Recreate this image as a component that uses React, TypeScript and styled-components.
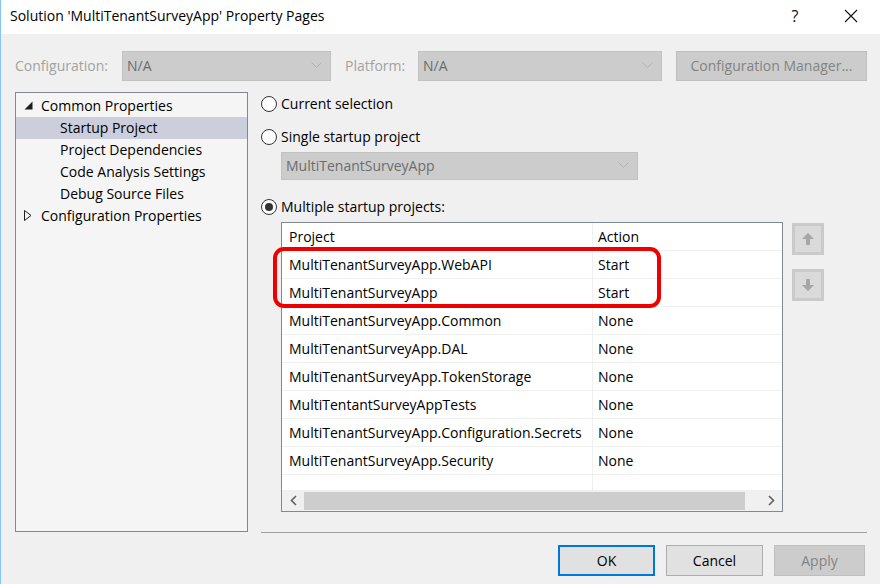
import React from "react";
import styled, { createGlobalStyle } from "styled-components";

const Global = createGlobalStyle`
  html, body { margin: 0; padding: 0; background: #f0f0f0; }
  * { box-sizing: border-box; }
`;

const Window = styled.div`
  width: 880px;
  height: 584px;
  background: #f0f0f0;
  border-left: 1px solid #86c5f5;
  font-family: "Open Sans", "Noto Sans", sans-serif;
  font-size: 14px;
  color: #000;
  display: flex;
  flex-direction: column;
  overflow: hidden;
`;

const TitleBar = styled.div`
  height: 34px;
  background: #fff;
  display: flex;
  align-items: center;
  padding-left: 9px;
  padding-bottom: 3px;
`;

const Title = styled.div`
  flex: 1;
  font-size: 14px;
`;

const TitleButton = styled.div<{ $mr?: number }>`
  width: 46px;
  height: 30px;
  margin-right: ${(p) => p.$mr ?? 0}px;
  display: flex;
  align-items: center;
  justify-content: center;
  font-size: 16px;
  color: #111;
`;

const ConfigRow = styled.div`
  margin-top: 17px;
  height: 30px;
  display: flex;
  align-items: center;
  padding-left: 14px;
`;

const DimLabel = styled.div<{ $w: number; $pl?: number }>`
  width: ${(p) => p.$w}px;
  padding-left: ${(p) => p.$pl ?? 0}px;
  padding-bottom: 1px;
  color: #a2a2a2;
`;

const Combo = styled.div<{ $w: number; $ml?: number; $mt?: number; $h?: number; $pb?: number }>`
  width: ${(p) => p.$w}px;
  height: ${(p) => p.$h ?? 30}px;
  margin-left: ${(p) => p.$ml ?? 0}px;
  margin-top: ${(p) => p.$mt ?? 0}px;
  background: #cccccc;
  border: 1px solid #c2c2c2;
  display: flex;
  align-items: center;
  padding: 0 8px ${(p) => p.$pb ?? 1}px 4px;
  color: #6d6d6d;
  font-size: 14px;
  flex-shrink: 0;
`;

const ComboText = styled.span`
  flex: 1;
`;

const DisabledButton = styled.div<{ $w: number; $ml?: number }>`
  width: ${(p) => p.$w}px;
  height: 30px;
  margin-left: ${(p) => p.$ml ?? 0}px;
  background: #cccccc;
  border: 1px solid #bfbfbf;
  color: #838383;
  display: flex;
  align-items: center;
  justify-content: center;
  padding-bottom: 1px;
`;

const Body = styled.div`
  margin-top: 11px;
  display: flex;
  padding-left: 14px;
`;

const Tree = styled.div`
  width: 233px;
  height: 440px;
  background: #f5f5f5;
  border: 1px solid #828790;
  padding-top: 2px;
`;

const TreeRow = styled.div<{ $indent: number; $sel?: boolean }>`
  height: 22px;
  display: flex;
  align-items: center;
  padding-left: ${(p) => p.$indent}px;
  padding-bottom: 1px;
  background: ${(p) => (p.$sel ? "#cccedb" : "transparent")};
  white-space: nowrap;
`;

const Expander = styled.span`
  width: 14px;
  margin-left: 8px;
  margin-right: 3px;
  display: inline-flex;
  align-items: center;
`;

const RightCol = styled.div`
  margin-left: 13px;
  width: 606px;
  display: flex;
  flex-direction: column;
`;

const RadioRow = styled.div<{ $mt: number }>`
  margin-top: ${(p) => p.$mt}px;
  height: 22px;
  display: flex;
  align-items: center;
  gap: 4px;
`;

const RadioLabel = styled.span`
  padding-bottom: 2px;
`;

const RadioCircle = styled.span<{ $on?: boolean }>`
  width: 16px;
  height: 16px;
  border-radius: 50%;
  border: 1px solid #333;
  background: #fff;
  display: inline-flex;
  align-items: center;
  justify-content: center;
  &::after {
    content: "";
    width: 8px;
    height: 8px;
    border-radius: 50%;
    background: ${(p) => (p.$on ? "#333" : "transparent")};
  }
`;

const TableArea = styled.div`
  margin-top: 4px;
  margin-left: 20px;
  display: flex;
  gap: 9px;
  position: relative;
`;

const Grid = styled.div`
  width: 502px;
  height: 290px;
  background: #fff;
  border: 1px solid #828790;
  display: flex;
  flex-direction: column;
`;

const GridRow = styled.div<{ $h?: number }>`
  height: ${(p) => p.$h ?? 28}px;
  display: grid;
  grid-template-columns: 310px 1fr;
  border-bottom: 1px solid #f0f0f0;
  flex-shrink: 0;
`;

const Cell = styled.div`
  display: flex;
  align-items: center;
  padding-left: 7px;
  white-space: nowrap;
  & + & {
    border-left: 1px solid #f0f0f0;
    padding-left: 5px;
  }
`;

const Filler = styled.div`
  flex: 1;
  display: grid;
  grid-template-columns: 310px 1fr;
  & > div + div {
    border-left: 1px solid #f0f0f0;
  }
`;

const HScroll = styled.div`
  height: 21px;
  background: #f0f0f0;
  display: flex;
  align-items: center;
  flex-shrink: 0;
`;

const ScrollArrow = styled.div`
  width: 22px;
  height: 100%;
  display: flex;
  align-items: center;
  justify-content: center;
`;

const Thumb = styled.div`
  width: 441px;
  height: 18px;
  background: #cdcdcd;
`;

const Highlight = styled.div`
  position: absolute;
  left: -8px;
  top: 25px;
  width: 388px;
  height: 61px;
  border: 4px solid #ee0000;
  border-radius: 11px;
  pointer-events: none;
`;

const MoveButtons = styled.div`
  display: flex;
  flex-direction: column;
  gap: 14px;
  padding-top: 1px;
`;

const MoveButton = styled.div`
  width: 32px;
  height: 32px;
  background: #dadada;
  border: 3px solid #cacaca;
  display: flex;
  align-items: center;
  justify-content: center;
`;

const Separator = styled.div`
  margin-top: 20px;
  height: 1px;
  background: #a0a0a0;
`;

const Footer = styled.div`
  margin-top: 12px;
  display: flex;
  justify-content: flex-end;
  gap: 11px;
  padding-right: 15px;
`;

const DialogButton = styled.div<{ $kind: "default" | "normal" | "disabled"; $w: number }>`
  width: ${(p) => p.$w}px;
  height: 31px;
  display: flex;
  align-items: center;
  justify-content: center;
  padding-bottom: 1px;
  background: ${(p) => (p.$kind === "disabled" ? "#cccccc" : "#e1e1e1")};
  border: ${(p) =>
    p.$kind === "default"
      ? "2px solid #0078d7"
      : p.$kind === "disabled"
      ? "1px solid #bfbfbf"
      : "1px solid #adadad"};
  color: ${(p) => (p.$kind === "disabled" ? "#838383" : "#000")};
`;

const Chevron = () => (
  <svg width="11" height="7" viewBox="0 0 11 7">
    <polyline points="0.5,0.5 5.5,5.5 10.5,0.5" fill="none" stroke="#b2b2b2" strokeWidth="1" />
  </svg>
);

const ArrowIcon = ({ up }: { up: boolean }) => (
  <svg width="14" height="14" viewBox="0 0 14 14" style={{ transform: up ? "none" : "rotate(180deg)" }}>
    <polygon points="7,1 13,7 9,7 9,13 5,13 5,7 1,7" fill="#a6a6a6" />
  </svg>
);

const rows: [string, string][] = [
  ["MultiTenantSurveyApp.WebAPI", "Start"],
  ["MultiTenantSurveyApp", "Start"],
  ["MultiTenantSurveyApp.Common", "None"],
  ["MultiTenantSurveyApp.DAL", "None"],
  ["MultiTenantSurveyApp.TokenStorage", "None"],
  ["MultiTentantSurveyAppTests", "None"],
  ["MultiTenantSurveyApp.Configuration.Secrets", "None"],
  ["MultiTenantSurveyApp.Security", "None"],
];

export default function App() {
  return (
    <>
      <Global />
      <Window>
        <TitleBar>
          <Title>Solution 'MultiTenantSurveyApp' Property Pages</Title>
          <TitleButton $mr={10}>?</TitleButton>
          <TitleButton $mr={6}>
            <svg width="14" height="14" viewBox="0 0 14 14">
              <path d="M1 1 L13 13 M13 1 L1 13" stroke="#111" strokeWidth="1.1" />
            </svg>
          </TitleButton>
        </TitleBar>

        <ConfigRow>
          <DimLabel $w={107}>Configuration:</DimLabel>
          <Combo $w={209}>
            <ComboText>N/A</ComboText>
            <Chevron />
          </Combo>
          <DimLabel $w={87} $pl={14}>Platform:</DimLabel>
          <Combo $w={244}>
            <ComboText>N/A</ComboText>
            <Chevron />
          </Combo>
          <DisabledButton $w={191} $ml={14}>Configuration Manager...</DisabledButton>
        </ConfigRow>

        <Body>
          <Tree>
            <TreeRow $indent={0}>
              <Expander>
                <svg width="9" height="9" viewBox="0 0 9 9">
                  <polygon points="8.5,0.5 8.5,8.5 0.5,8.5" fill="#1e1e1e" />
                </svg>
              </Expander>
              Common Properties
            </TreeRow>
            <TreeRow $indent={44} $sel>Startup Project</TreeRow>
            <TreeRow $indent={44}>Project Dependencies</TreeRow>
            <TreeRow $indent={44}>Code Analysis Settings</TreeRow>
            <TreeRow $indent={44}>Debug Source Files</TreeRow>
            <TreeRow $indent={0}>
              <Expander>
                <svg width="8" height="11" viewBox="0 0 8 11">
                  <polygon points="0.5,0.5 7,5.5 0.5,10.5" fill="none" stroke="#1e1e1e" strokeWidth="1" />
                </svg>
              </Expander>
              Configuration Properties
            </TreeRow>
          </Tree>

          <RightCol>
            <RadioRow $mt={1}>
              <RadioCircle />
              <RadioLabel>Current selection</RadioLabel>
            </RadioRow>
            <RadioRow $mt={11}>
              <RadioCircle />
              <RadioLabel>Single startup project</RadioLabel>
            </RadioRow>
            <Combo $w={357} $ml={20} $mt={4} $h={28} $pb={2}>
              <ComboText>MultiTenantSurveyApp</ComboText>
              <Chevron />
            </Combo>
            <RadioRow $mt={16}>
              <RadioCircle $on />
              <RadioLabel>Multiple startup projects:</RadioLabel>
            </RadioRow>

            <TableArea>
              <Grid>
                <GridRow>
                  <Cell>Project</Cell>
                  <Cell>Action</Cell>
                </GridRow>
                {rows.map(([p, a]) => (
                  <GridRow key={p}>
                    <Cell>{p}</Cell>
                    <Cell>{a}</Cell>
                  </GridRow>
                ))}
                <Filler>
                  <div />
                  <div />
                </Filler>
                <HScroll>
                  <ScrollArrow>
                    <svg width="7" height="11" viewBox="0 0 7 11">
                      <polyline points="6,1 1.5,5.5 6,10" fill="none" stroke="#606060" strokeWidth="1.6" />
                    </svg>
                  </ScrollArrow>
                  <Thumb />
                  <span style={{ flex: 1 }} />
                  <ScrollArrow>
                    <svg width="7" height="11" viewBox="0 0 7 11">
                      <polyline points="1,1 5.5,5.5 1,10" fill="none" stroke="#606060" strokeWidth="1.6" />
                    </svg>
                  </ScrollArrow>
                </HScroll>
              </Grid>
              <MoveButtons>
                <MoveButton>
                  <ArrowIcon up />
                </MoveButton>
                <MoveButton>
                  <ArrowIcon up={false} />
                </MoveButton>
              </MoveButtons>
              <Highlight />
            </TableArea>

            <Separator />
          </RightCol>
        </Body>

        <Footer>
          <DialogButton $kind="default" $w={97}>OK</DialogButton>
          <DialogButton $kind="normal" $w={97}>Cancel</DialogButton>
          <DialogButton $kind="disabled" $w={91}>Apply</DialogButton>
        </Footer>
      </Window>
    </>
  );
}
